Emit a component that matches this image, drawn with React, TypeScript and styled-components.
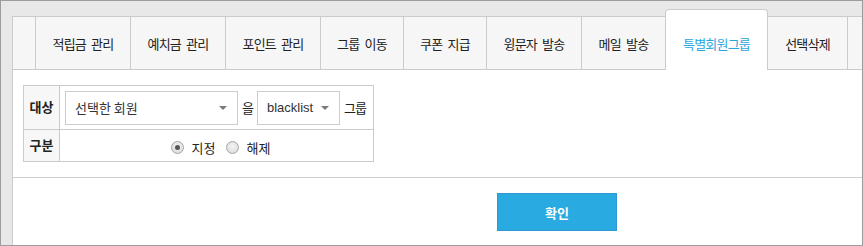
import React from "react";
import styled, { createGlobalStyle } from "styled-components";

const Global = createGlobalStyle`
  html, body { margin: 0; padding: 0; background: #fff; }
  body { font-family: "Noto Sans CJK KR", "Noto Sans", "Liberation Sans", sans-serif; color: #333; }
  * { box-sizing: border-box; }
`;

const Frame = styled.div`
  width: 863px;
  height: 246px;
  border: 1px solid #9c9c9c;
  background: #e8e8e8;
  padding: 8px 0 0 11px;
  display: flex;
  flex-direction: column;
`;

const TabBar = styled.div`
  display: flex;
  align-items: flex-end;
  height: 61px;
  flex: none;
`;

const Tab = styled.div<{ $w?: number; $active?: boolean; $fill?: boolean }>`
  flex: ${(p) => (p.$fill ? "1 1 auto" : "none")};
  width: ${(p) => (p.$w ? `${p.$w}px` : "auto")};
  height: ${(p) => (p.$active ? "61px" : "54px")};
  display: flex;
  align-items: center;
  justify-content: center;
  padding-top: ${(p) => (p.$active ? "7px" : "0")};
  font-size: 13px;
  letter-spacing: -0.8px;
  word-spacing: 3px;
  white-space: nowrap;
  background: ${(p) => (p.$active ? "#fff" : "#f6f6f6")};
  color: ${(p) => (p.$active ? "#2aa6de" : "#222")};
  border-left: 1px solid #cbcbcb;
  border-top: 1px solid #cbcbcb;
  border-bottom: ${(p) => (p.$active ? "none" : "1px solid #cbcbcb")};
  border-right: ${(p) => (p.$active ? "1px solid #cbcbcb" : "none")};
  border-radius: ${(p) => (p.$active ? "4px 4px 0 0" : "0")};
  margin-right: ${(p) => (p.$active ? "-1px" : "0")};
  position: relative;
  z-index: ${(p) => (p.$active ? 1 : 0)};
`;

const Content = styled.div`
  flex: 1;
  background: #fff;
  border-left: 1px solid #cbcbcb;
  display: flex;
  flex-direction: column;
`;

const FormSection = styled.div`
  padding: 15px 0 15px 10px;
  border-bottom: 1px solid #cfcfcf;
`;

const FormGrid = styled.div`
  display: grid;
  width: 351px;
  grid-template-columns: 36px 314px;
  grid-template-rows: 44px 32px;
  border-top: 1px solid #cbcbcb;
  border-left: 1px solid #cbcbcb;
`;

const HeadCell = styled.div`
  background: #f7f7f7;
  border-right: 1px solid #cbcbcb;
  border-bottom: 1px solid #cbcbcb;
  font-size: 13px;
  font-weight: 700;
  color: #222;
  display: flex;
  align-items: center;
  justify-content: center;
  padding-bottom: 2px;
`;

const ValueCell = styled.div<{ $center?: boolean }>`
  border-right: 1px solid #cbcbcb;
  border-bottom: 1px solid #cbcbcb;
  display: flex;
  align-items: center;
  justify-content: ${(p) => (p.$center ? "center" : "flex-start")};
  padding: ${(p) => (p.$center ? "3px 0 0 8px" : "0 0 0 5px")};
  gap: 4px;
  font-size: 13px;
  color: #222;
  white-space: nowrap;
`;

const Word = styled.span`
  letter-spacing: -1px;
`;

const SelectBox = styled.div<{ $w: number }>`
  width: ${(p) => p.$w}px;
  height: 34px;
  flex: none;
  border: 1px solid #cdcdcd;
  background: #fff;
  display: flex;
  align-items: center;
  justify-content: space-between;
  padding: 0 10px 0 9px;
  font-size: 13px;
  color: #333;
`;

const LatinText = styled.span`
  font-family: "Liberation Sans", Arial, sans-serif;
  font-size: 13px;
`;

const Arrow = styled.span`
  width: 0;
  height: 0;
  border-left: 4px solid transparent;
  border-right: 4px solid transparent;
  border-top: 4px solid #7a7a7a;
  margin-top: 1px;
`;

const RadioGroup = styled.div`
  display: flex;
  align-items: center;
  gap: 10px;
`;

const RadioLabel = styled.label`
  display: flex;
  align-items: center;
  gap: 8px;
  font-size: 13px;
  color: #222;
`;

const RadioDot = styled.span<{ $checked?: boolean }>`
  width: 13px;
  height: 13px;
  border-radius: 50%;
  border: 1px solid #a6a6a6;
  background: radial-gradient(circle at 50% 40%, #f4f4f4 0%, #e2e2e2 60%, #d0d0d0 100%);
  display: flex;
  align-items: center;
  justify-content: center;
  &::after {
    content: "";
    width: 5px;
    height: 5px;
    border-radius: 50%;
    background: ${(p) => (p.$checked ? "#555" : "transparent")};
  }
`;

const Footer = styled.div`
  flex: 1;
  padding: 15px 0 0 484px;
`;

const ConfirmButton = styled.button`
  width: 120px;
  height: 38px;
  background: #29abe2;
  border: 1px solid #3198d6;
  color: #fff;
  font-family: "Noto Sans CJK KR", sans-serif;
  font-size: 13px;
  font-weight: 700;
  cursor: pointer;
  padding: 0;
`;

const tabs: { label: string; w: number; active?: boolean }[] = [
  { label: "적립금 관리", w: 95 },
  { label: "예치금 관리", w: 95 },
  { label: "포인트 관리", w: 95 },
  { label: "그룹 이동", w: 83 },
  { label: "쿠폰 지급", w: 83 },
  { label: "윙문자 발송", w: 95 },
  { label: "메일 발송", w: 84 },
  { label: "특별회원그룹", w: 103, active: true },
  { label: "선택삭제", w: 80 },
];

export default function App() {
  return (
    <>
      <Global />
      <Frame>
        <TabBar>
          <Tab $w={23} />
          {tabs.map((t) => (
            <Tab key={t.label} $w={t.w} $active={t.active}>
              {t.label}
            </Tab>
          ))}
          <Tab $fill />
        </TabBar>
        <Content>
          <FormSection>
            <FormGrid>
              <HeadCell>대상</HeadCell>
              <ValueCell>
                <SelectBox $w={173}>
                  <span>선택한 회원</span>
                  <Arrow />
                </SelectBox>
                <Word>을</Word>
                <SelectBox $w={83}>
                  <LatinText>blacklist</LatinText>
                  <Arrow />
                </SelectBox>
                <Word>그룹</Word>
              </ValueCell>
              <HeadCell>구분</HeadCell>
              <ValueCell $center>
                <RadioGroup>
                  <RadioLabel>
                    <RadioDot $checked />
                    지정
                  </RadioLabel>
                  <RadioLabel>
                    <RadioDot />
                    해제
                  </RadioLabel>
                </RadioGroup>
              </ValueCell>
            </FormGrid>
          </FormSection>
          <Footer>
            <ConfirmButton>확인</ConfirmButton>
          </Footer>
        </Content>
      </Frame>
    </>
  );
}
